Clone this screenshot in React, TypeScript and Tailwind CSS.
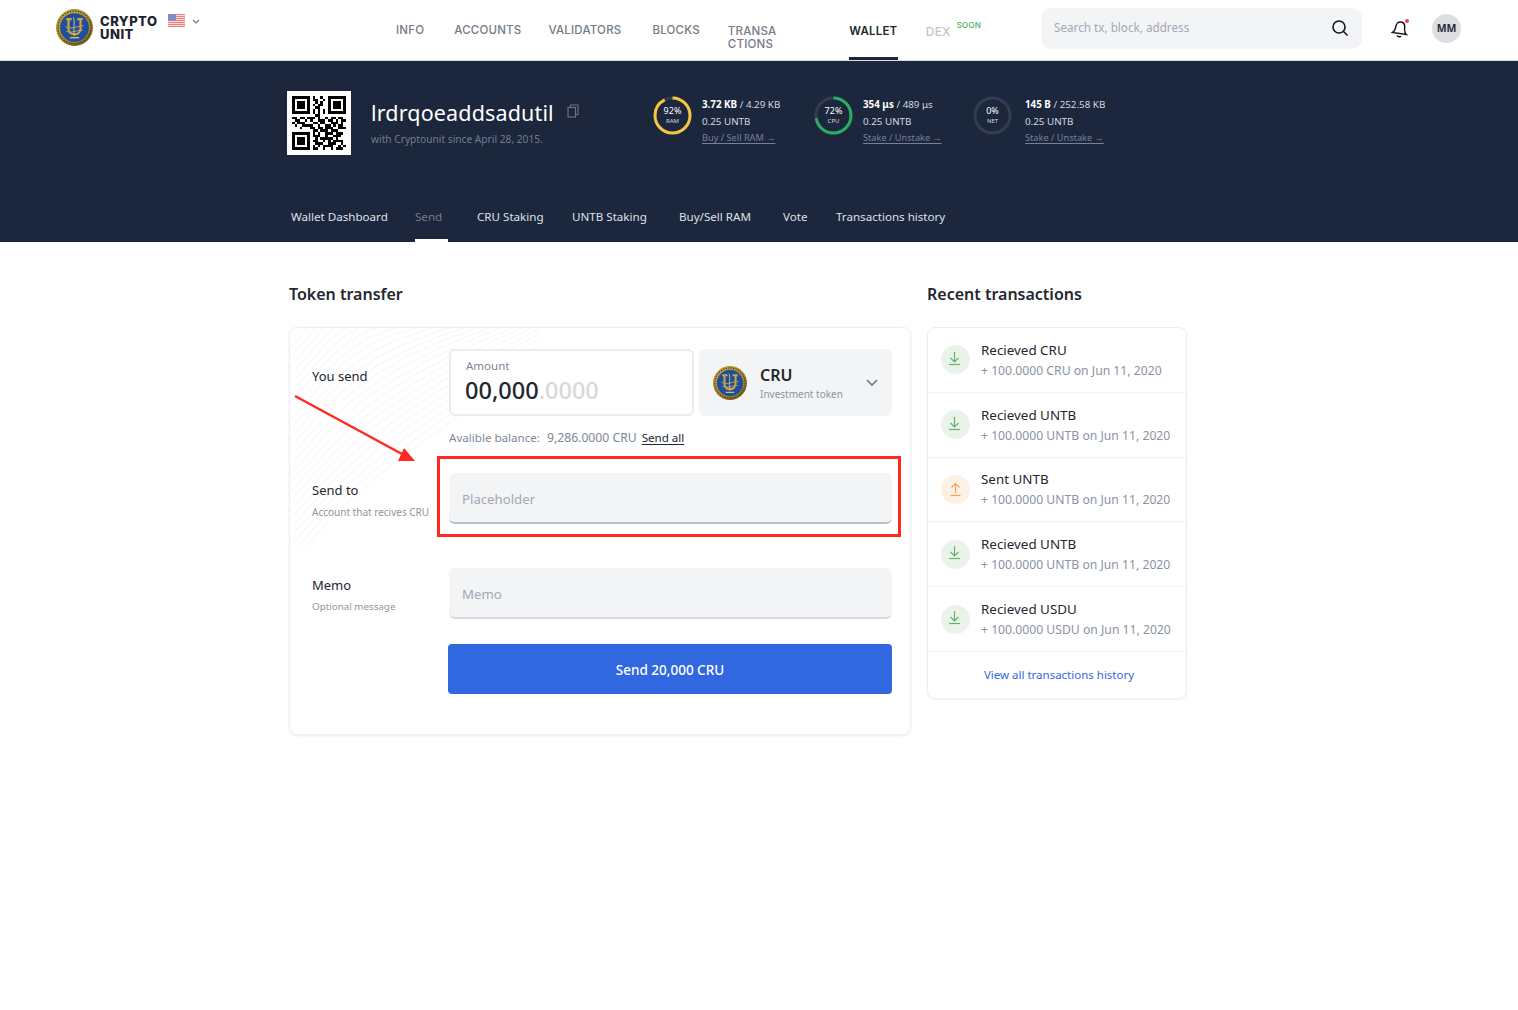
import React from "react";

const plex = "font-['Noto_Sans',sans-serif]";

function Coin({ size }: { size: number }) {
  return (
    <svg width={size} height={size} viewBox="0 0 40 40" className="shrink-0">
      <defs>
        <radialGradient id="gold" cx="40%" cy="35%" r="70%">
          <stop offset="0%" stopColor="#d9b54a" />
          <stop offset="70%" stopColor="#a98a2c" />
          <stop offset="100%" stopColor="#6f5a20" />
        </radialGradient>
      </defs>
      <circle cx="20" cy="20" r="20" fill="url(#gold)" />
      <circle cx="20" cy="20" r="17.8" fill="none" stroke="#3b3520" strokeWidth="1.2" strokeDasharray="1.5 1.5" />
      <circle cx="20" cy="20" r="15.5" fill="#1f4f9c" />
      <path d="M11 11h6M23 11h6M13.5 11v10c0 8.5 13 8.5 13 0V11" fill="none" stroke="#c9a545" strokeWidth="2.4" />
      <path d="M10 19c6 4 14-1 20-1M11 24c6 3 13-2 18-1" fill="none" stroke="#c9a545" strokeWidth="1" />
      <path d="M19 9c2 5-1 12 1 20" fill="none" stroke="#e0c46c" strokeWidth="1" />
      <path d="M15 31h10" stroke="#d8b95a" strokeWidth="1.6" />
    </svg>
  );
}

function Flag() {
  return (
    <svg width="17" height="13" viewBox="0 0 17 13" className="shrink-0">
      <rect width="17" height="13" fill="#fbdada" />
      {[0, 2, 4, 6, 8, 10, 12].map((y) => (
        <rect key={y} y={y} width="17" height="1" fill="#f27f7f" />
      ))}
      <rect width="8" height="6.5" fill="#7f8ec9" />
    </svg>
  );
}

const QR_ROWS = [
  "111111101001001111111",
  "100000101100101000001",
  "101110100101001011101",
  "101110101011001011101",
  "101110100110001011101",
  "100000101010101000001",
  "111111101010101111111",
  "000000000110000000000",
  "110110111010010110110",
  "011001010011101101011",
  "101110001101100111010",
  "010011110010011010110",
  "000100011011011100111",
  "000000001101110111000",
  "111111101010011101110",
  "100000101110010011100",
  "101110100101111101000",
  "101110101100101011110",
  "101110100111001110010",
  "100000101010111100101",
  "111111101100100101110",
];

function QR() {
  return (
    <div className="w-[64px] h-[64px] bg-white flex items-center justify-center shrink-0">
      <svg width="54" height="54" viewBox="0 0 21 21" shapeRendering="crispEdges">
        {QR_ROWS.flatMap((row, y) =>
          row.split("").map((c, x) => (c === "1" ? <rect key={`${x}-${y}`} x={x} y={y} width="1" height="1" fill="#000" /> : null))
        )}
      </svg>
    </div>
  );
}

function Ring({ pct, color, label, sub }: { pct: number; color: string; label: string; sub: string }) {
  const r = 17.5;
  const c = 2 * Math.PI * r;
  return (
    <div className="relative w-[39px] h-[39px] shrink-0">
      <svg width="39" height="39" viewBox="0 0 39 39" className="-rotate-90">
        <circle cx="19.5" cy="19.5" r={r} fill="none" stroke="#333d50" strokeWidth="3" />
        {pct > 0 && (
          <circle
            cx="19.5"
            cy="19.5"
            r={r}
            fill="none"
            stroke={color}
            strokeWidth="3"
            strokeDasharray={`${(c * pct) / 100} ${c}`}
          />
        )}
      </svg>
      <div className="absolute inset-0 flex flex-col items-center justify-center text-white">
        <span className="text-[9px] leading-[12px]">{label}</span>
        <span className="text-[6px] leading-[9px] text-[#d5d9e0]">{sub}</span>
      </div>
    </div>
  );
}

function Stat({ ring, bold, rest, link, className }: { ring: React.ReactNode; bold: string; rest: string; link: string; className: string }) {
  return (
    <div className={`flex items-start shrink-0 ${className}`}>
      {ring}
      <div className="flex flex-col pt-[1px] text-[9.8px] leading-[16.5px] text-[#d5d9e0] whitespace-nowrap">
        <div>
          <span className="font-bold text-white">{bold}</span> / {rest}
        </div>
        <div>0.25 UNTB</div>
        <div className="text-[9.2px] text-[#76809a] underline underline-offset-2">{link}</div>
      </div>
    </div>
  );
}

const NAV = [
  { t: "INFO", c: "mr-[30px]" },
  { t: "ACCOUNTS", c: "mr-[27px]" },
  { t: "VALIDATORS", c: "mr-[31px]" },
  { t: "BLOCKS", c: "mr-[28px]" },
];

const TABS = [
  { t: "Wallet Dashboard", c: "w-[124px] text-[#dfe2e8]" },
  { t: "Send", c: "w-[62px] text-[#727c90]" },
  { t: "CRU Staking", c: "w-[95px] text-[#dfe2e8]" },
  { t: "UNTB Staking", c: "w-[107px] text-[#dfe2e8]" },
  { t: "Buy/Sell RAM", c: "w-[104px] text-[#dfe2e8]" },
  { t: "Vote", c: "w-[53px] text-[#dfe2e8]" },
  { t: "Transactions history", c: "text-[#dfe2e8]" },
];

const TX = [
  { t: "Recieved CRU", s: "+ 100.0000 CRU on Jun 11, 2020", up: false },
  { t: "Recieved UNTB", s: "+ 100.0000 UNTB on Jun 11, 2020", up: false },
  { t: "Sent UNTB", s: "+ 100.0000 UNTB on Jun 11, 2020", up: true },
  { t: "Recieved UNTB", s: "+ 100.0000 UNTB on Jun 11, 2020", up: false },
  { t: "Recieved USDU", s: "+ 100.0000 USDU on Jun 11, 2020", up: false },
];

function TxIcon({ up }: { up: boolean }) {
  return (
    <div className={`w-[29px] h-[29px] rounded-full flex items-center justify-center shrink-0 ${up ? "bg-[#fdf1e6]" : "bg-[#e9f3ea]"} ${up ? "" : "pr-[3px] pb-[3px]"}`}>
      <svg width="13" height="15" viewBox="0 0 13 15" fill="none" stroke={up ? "#f2a35e" : "#62b56c"} strokeWidth="1.2">
        {up ? (
          <>
            <path d="M6.5 11V1.5M2.5 5.5l4-4 4 4" />
            <path d="M1.5 13.5h10" />
          </>
        ) : (
          <>
            <path d="M6.5 1v10M2.5 7l4 4 4-4" />
            <path d="M1 13.5h11" />
          </>
        )}
      </svg>
    </div>
  );
}

const WAVES = [0, 9, 18, 27, 36, 45, 54, 63, 72, 81, 90, 99, 108, 117, 126, 135, 144, 153, 162, 171, 180, 189, 198, 207, 216];

export default function App() {
  return (
    <div className={`${plex} relative min-h-[1010px] bg-white text-[#22262f]`}>
      {/* Header */}
      <header className="h-[61px] flex items-center border-b border-[#d9dde3] bg-white">
        <div className="flex items-start pl-[56px] w-[396px] shrink-0 -mt-[6px]">
          <Coin size={37} />
          <div className="ml-[7px] mt-[6px] font-['Inter',sans-serif] font-extrabold text-[13px] leading-[13px] text-[#20232b] w-[68px] tracking-[0.5px]">
            CRYPTO
            <br />
            UNIT
          </div>
          <div className="mt-[5px]">
            <Flag />
          </div>
          <svg width="8" height="5" viewBox="0 0 8 5" className="ml-[7px] mt-[10px]" fill="none" stroke="#6b7488" strokeWidth="1.1">
            <path d="M1 1l3 3 3-3" />
          </svg>
        </div>
        <nav className="flex items-center h-full font-['Inter',sans-serif] font-medium text-[11.5px] text-[#767b85] tracking-[0.2px]">
          {NAV.map((n) => (
            <span key={n.t} className={`pt-[2px] ${n.c}`}>
              {n.t}
            </span>
          ))}
          <span className="w-[121px] leading-[13px] pt-[15px]">
            TRANSA
            <br />
            CTIONS
          </span>
          <span className="relative h-full w-[49px] flex items-center justify-center text-[#23262e] font-semibold mr-[28px] pt-[3px]">
            WALLET
            <span className="absolute left-0 right-0 bottom-0 h-[3px] bg-[#1c263c]" />
          </span>
          <span className="text-[12px] text-[#c4c6cb] pt-[3px]">DEX</span>
          <span className="ml-[6px] mb-[10px] text-[8px] text-[#4cae55]">SOON</span>
        </nav>
        <div className="ml-[60px] w-[321px] h-[41px] rounded-[10px] bg-[#f3f4f6] flex items-center justify-between pl-[13px] pr-[13px] mb-[4px]">
          <span className="text-[11.7px] text-[#a3a8b2]">Search tx, block, address</span>
          <svg width="18" height="18" viewBox="0 0 18 18" fill="none" stroke="#14161b" strokeWidth="1.6">
            <circle cx="8" cy="8" r="6" />
            <path d="M12.5 12.5L16.5 16.5" />
          </svg>
        </div>
        <div className="relative ml-[29px] w-[18px] h-[20px] mb-[3px]">
          <svg width="18" height="20" viewBox="0 0 18 20" fill="none" stroke="#14161b" strokeWidth="1.4">
            <g transform="rotate(8 9 10)">
              <path d="M9 3c-3 0-4.5 2.5-4.5 5.5 0 3-1 5-2.5 6h14c-1.5-1-2.5-3-2.5-6C13.500 5.500 12 3 9 3z" />
              <path d="M7 16.800c.4 1.400 3.600 1.400 4 0" />
            </g>
          </svg>
          <span className="absolute right-0 top-0 w-[4px] h-[4px] rounded-full bg-[#ef4444]" />
        </div>
        <div className="ml-[23px] w-[29px] h-[29px] rounded-full bg-[#dcdee2] flex items-center justify-center text-[10.5px] font-bold text-[#2b2e35] mb-[3px]">
          MM
        </div>
      </header>

      {/* Hero */}
      <section className="h-[181px] bg-[#1c263c] pl-[287px] flex flex-col">
        <div className="flex items-start pt-[30px] h-[143px]">
          <QR />
          <div className="ml-[20px] w-[262px] shrink-0">
            <div className="flex items-center mt-[6px]">
              <span className="text-[21.5px] leading-[32px] text-white tracking-[0.15px]">lrdrqoeaddsadutil</span>
              <svg width="12" height="14" viewBox="0 0 12 14" className="ml-[13px] mb-[4px]" fill="none" stroke="#6d7688" strokeWidth="1.1">
                <rect x="1" y="3.5" width="7.5" height="9.5" />
                <path d="M3.5 3.5V1H11v9.5H8.500" />
              </svg>
            </div>
            <div className="text-[10.2px] leading-[14px] text-[#727c90] mt-[3px]">with Cryptounit since April 28, 2015.</div>
          </div>
          <div className="flex mt-[5px] ml-[20px]">
            <Stat
              className="gap-[10px] w-[161px]"
              ring={<Ring pct={92} color="#f4c542" label="92%" sub="RAM" />}
              bold="3.72 KB"
              rest="4.29 KB"
              link="Buy / Sell RAM →"
            />
            <Stat
              className="gap-[10px] w-[159px]"
              ring={<Ring pct={72} color="#27ae60" label="72%" sub="CPU" />}
              bold="354 μs"
              rest="489 μs"
              link="Stake / Unstake →"
            />
            <Stat
              className="gap-[13px]"
              ring={<Ring pct={0} color="#333d50" label="0%" sub="NET" />}
              bold="145 B"
              rest="252.58 KB"
              link="Stake / Unstake →"
            />
          </div>
        </div>
        <div className="flex h-[38px] pl-[4px] text-[11.6px]">
          {TABS.map((t) => (
            <div key={t.t} className={`relative whitespace-nowrap pt-[4px] ${t.c}`}>
              {t.t}
              {t.t === "Send" && <span className="absolute left-0 bottom-0 h-[3px] w-[33px] bg-white" />}
            </div>
          ))}
        </div>
      </section>

      {/* Main */}
      <main className="flex pl-[289px] pt-[40px] gap-[16px] items-start">
        <div className="w-[622px] shrink-0">
          <h2 className="text-[16px] leading-[24px] font-semibold text-[#24272f] mb-[21px]">Token transfer</h2>
          <div className="relative h-[408px] rounded-[8px] border border-[#eceef1] shadow-[0_1px_3px_rgba(30,40,60,0.08)] overflow-hidden pl-[22px]">
            <svg className="absolute left-0 top-0" width="250" height="220" fill="none" stroke="#f4f5f6" strokeWidth="1">
              {WAVES.map((o) => (
                <path key={o} d={`M0 ${o + 20}C40 ${o - 20} 60 ${o - 70} ${110 + o} -10`} />
              ))}
            </svg>
            <div className="relative flex pt-[21px]">
              <div className="w-[137px] shrink-0 text-[13px] pt-[17px] leading-[20px]">You send</div>
              <div className="w-[443px]">
                <div className="flex gap-[5px]">
                  <div className="w-[245px] h-[67px] rounded-[6px] border-2 border-[#e9edf2] bg-white pl-[15px] pt-[7px]">
                    <div className="text-[11.5px] leading-[15px] text-[#7d8798]">Amount</div>
                    <div className="text-[23.5px] leading-[31px] font-medium -ml-[1px] mt-[2px] text-[#22262f]">
                      00,000<span className="text-[#d6d8da]">.0000</span>
                    </div>
                  </div>
                  <div className="flex-1 h-[67px] rounded-[6px] bg-[#f3f4f6] flex items-center pl-[14px] pr-[14px]">
                    <Coin size={34} />
                    <div className="ml-[13px]">
                      <div className="text-[16px] leading-[22px] font-semibold">CRU</div>
                      <div className="text-[10px] leading-[14px] text-[#8d95a3] mt-[1px]">Investment token</div>
                    </div>
                    <svg width="12" height="8" viewBox="0 0 12 8" className="ml-auto" fill="none" stroke="#707a8c" strokeWidth="1.7">
                      <path d="M1 1l5 5 5-5" />
                    </svg>
                  </div>
                </div>
                <div className="mt-[14px] flex text-[11.6px] leading-[16px] text-[#7d8798] whitespace-nowrap">
                  <span>Avalible balance:</span>
                  <span className="ml-[7px] text-[12.2px]">9,286.0000 CRU</span>
                  <span className="ml-[5px] text-[#22262f] underline underline-offset-2">Send all</span>
                </div>
              </div>
            </div>
            <div className="relative flex mt-[27px]">
              <div className="w-[137px] shrink-0 pt-[7px]">
                <div className="text-[13px] leading-[20px]">Send to</div>
                <div className="text-[10px] leading-[14px] text-[#8d95a3] mt-[5px] whitespace-nowrap">Account that recives CRU</div>
              </div>
              <div className="w-[443px] h-[51px] rounded-[6px] bg-[#f3f4f6] border-b-2 border-[#b9bfc9] flex items-center pl-[13px] pt-[4px] text-[13.2px] text-[#a3a8b2]">
                Placeholder
              </div>
            </div>
            <div className="relative flex mt-[44px]">
              <div className="w-[137px] shrink-0 pt-[7px]">
                <div className="text-[13px] leading-[20px]">Memo</div>
                <div className="text-[9.8px] leading-[14px] text-[#8d95a3] mt-[5px]">Optional message</div>
              </div>
              <div className="w-[443px] h-[51px] rounded-[6px] bg-[#f3f4f6] border-b-2 border-[#d7dae0] flex items-center pl-[13px] pt-[4px] text-[13.2px] text-[#a3a8b2]">
                Memo
              </div>
            </div>
            <div className="relative flex mt-[25px] pl-[136px]">
              <div className="w-[444px] h-[50px] rounded-[4px] bg-[#3268df] flex items-center justify-center pt-[2px] text-white text-[13.5px] font-medium">
                Send 20,000 CRU
              </div>
            </div>
          </div>
        </div>

        <div className="w-[260px] shrink-0">
          <h2 className="text-[16px] leading-[24px] font-semibold text-[#24272f] mb-[21px]">Recent transactions</h2>
          <div className="rounded-[8px] border border-[#eceef1] shadow-[0_1px_2px_rgba(30,40,60,0.06)]">
            {TX.map((x, i) => (
              <div key={i} className="h-[64.8px] border-b border-[#f0f1f3] flex items-center pl-[13px]">
                <TxIcon up={x.up} />
                <div className="ml-[11px] whitespace-nowrap">
                  <div className="text-[13.4px] leading-[20px] text-[#24272f]">{x.t}</div>
                  <div className="text-[12.2px] leading-[18px] text-[#8a93a3] mt-[2px]">{x.s}</div>
                </div>
              </div>
            ))}
            <div className="h-[46px] flex items-center justify-center pl-[4px] text-[11.5px] text-[#3268df]">View all transactions history</div>
          </div>
        </div>
      </main>

      {/* Annotations */}
      <div className="absolute left-[437px] top-[456px] w-[464px] h-[81px] border-[3px] border-[#ff2a1f] pointer-events-none" />
      <svg className="absolute left-[290px] top-[390px] pointer-events-none" width="130" height="76" viewBox="0 0 130 76" fill="none">
        <path d="M5 6L112 64" stroke="#ff2a1f" strokeWidth="2.5" />
        <path d="M125 71L108 71L114 58Z" fill="#ff2a1f" />
      </svg>
    </div>
  );
}
